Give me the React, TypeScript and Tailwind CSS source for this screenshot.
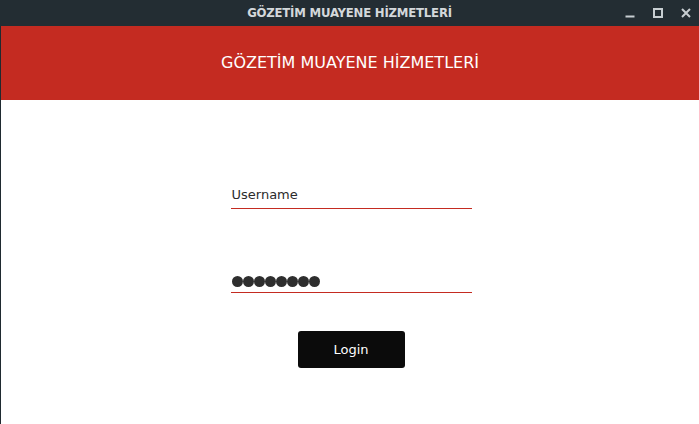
import React from 'react';

const TitleBar: React.FC = () => (
  <div className="relative flex h-[26px] items-center justify-center bg-[#232d33]">
    <span
      className="text-[13px] font-bold tracking-[-0.2px] text-[#d3d8db]"
      style={{ fontFamily: '"DejaVu Sans Condensed", "DejaVu Sans", sans-serif' }}
    >
      GÖZETİM MUAYENE HİZMETLERİ
    </span>
    {/* window controls */}
    <div className="absolute right-[8px] top-0 flex h-[26px] items-center gap-[18px]">
      <svg width="10" height="10" viewBox="0 0 10 10">
        <rect x="0.5" y="7.5" width="9" height="2" fill="#c7ced2" />
      </svg>
      <svg width="10" height="10" viewBox="0 0 10 10">
        <rect x="1" y="1" width="8" height="8" fill="none" stroke="#c7ced2" strokeWidth="2" />
      </svg>
      <svg width="10" height="10" viewBox="0 0 10 10">
        <path d="M1 1 L9 9 M9 1 L1 9" stroke="#c7ced2" strokeWidth="2" />
      </svg>
    </div>
  </div>
);

export default function App() {
  return (
    <div
      className="flex h-[424px] w-[699px] flex-col overflow-hidden bg-white"
      style={{ fontFamily: '"DejaVu Sans", sans-serif' }}
    >
      <TitleBar />
      <div className="flex flex-1 border-l border-[#1f2a30]">
        <div className="flex flex-1 flex-col">
          {/* header */}
          <div className="flex h-[74px] items-center justify-center bg-[#c42b21]">
            <span className="text-[16px] text-white">GÖZETİM MUAYENE HİZMETLERİ</span>
          </div>

          {/* form */}
          <div className="flex flex-col items-center pt-[87px]">
            <div className="w-[241px] translate-x-[1px]">
              <div className="border-b border-[#c42b21] pb-[5px] pl-[1px] text-[13px] leading-[16px] text-[#2b2b2b]">
                Username
              </div>
              <div className="mt-[67px] flex border-b border-[#c42b21] pb-[5px] pl-[1px]">
                {Array.from({ length: 8 }).map((_, i) => (
                  <span key={i} className="h-[11px] w-[11px] rounded-full bg-[#2e2e2e]" />
                ))}
              </div>
            </div>
            <button className="mt-[38px] flex h-[37px] w-[107px] translate-x-[1px] items-center justify-center rounded-[3px] bg-[#0b0b0b] text-[13px] text-white">
              Login
            </button>
          </div>
        </div>
      </div>
    </div>
  );
}
